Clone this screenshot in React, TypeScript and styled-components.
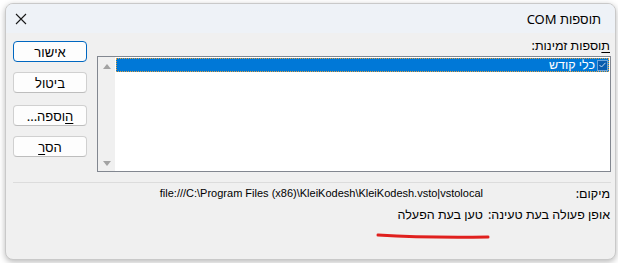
import React from 'react';
import styled, { createGlobalStyle } from 'styled-components';

const Global = createGlobalStyle`
  html, body {
    margin: 0;
    padding: 0;
    background: #ffffff;
    font-family: 'Noto Sans', 'Liberation Sans', sans-serif;
    font-size: 12.5px;
    color: #000;
  }
`;

const Page = styled.div`
  padding: 3px 2px 0 5px;
  width: 618px;
  height: 263px;
  box-sizing: border-box;
`;

const Window = styled.div`
  position: relative;
  width: 611px;
  height: 257px;
  box-sizing: border-box;
  border: 1px solid #c9c9c9;
  border-radius: 8px;
  overflow: hidden;
  background: #f0f0f0;
  box-shadow: 0 2px 6px rgba(0, 0, 0, 0.28);
  display: flex;
  flex-direction: column;
`;

const TitleBar = styled.div`
  height: 29px;
  background: #eef2f7;
  display: flex;
  align-items: center;
  justify-content: space-between;
  padding: 0 14px 0 9px;
  font-size: 13px;
`;

const CloseButton = styled.div`
  display: flex;
  width: 12px;
  height: 12px;
`;

const Body = styled.div`
  flex: 1;
  display: flex;
  flex-direction: column;
  padding: 6px 4px 0 7px;
`;

const TopArea = styled.div`
  display: flex;
  gap: 10px;
`;

const MainColumn = styled.div`
  flex: 1;
  display: flex;
  flex-direction: column;
`;

const Label = styled.div`
  height: 17px;
  line-height: 14px;
  padding-right: 1px;
`;

const AccessKey = styled.span`
  text-decoration: underline;
  text-underline-offset: 2px;
`;

const ListBox = styled.div`
  height: 116px;
  box-sizing: border-box;
  border: 1px solid #828790;
  background: #fff;
  display: flex;
`;

const Items = styled.div`
  flex: 1;
  padding: 1px 1px 0 1px;
`;

const Item = styled.div<{ $selected?: boolean }>`
  height: 14px;
  display: flex;
  align-items: center;
  gap: 2px;
  padding-right: 1px;
  background: ${(p) => (p.$selected ? '#0078d7' : 'transparent')};
  color: ${(p) => (p.$selected ? '#fff' : '#000')};
  outline: ${(p) => (p.$selected ? '1px dotted #e0a040' : 'none')};
  outline-offset: -1px;
  line-height: 14px;
`;

const Check = styled.span`
  width: 11px;
  height: 11px;
  box-sizing: border-box;
  border: 1px solid #6fa6dc;
  background: #0b5cad;
  display: flex;
  align-items: center;
  justify-content: center;
`;

const ScrollBar = styled.div`
  width: 17px;
  background: #f0f0f0;
  display: flex;
  flex-direction: column;
  justify-content: space-between;
  align-items: center;
  padding: 7px 0 5px;
`;

const Arrow = styled.span<{ $down?: boolean }>`
  width: 0;
  height: 0;
  border-left: 4px solid transparent;
  border-right: 4px solid transparent;
  ${(p) =>
    p.$down ? 'border-top: 5px solid #a3a3a3;' : 'border-bottom: 5px solid #a3a3a3;'}
`;

const ButtonColumn = styled.div`
  width: 74px;
  display: flex;
  flex-direction: column;
  gap: 10px;
  padding-top: 2px;
`;

const Button = styled.div<{ $primary?: boolean; $gapBefore?: number }>`
  height: 21px;
  box-sizing: border-box;
  margin-top: ${(p) => p.$gapBefore || 0}px;
  border: 1px solid ${(p) => (p.$primary ? '#0067c0' : '#d0d0d0')};
  border-bottom-color: ${(p) => (p.$primary ? '#0067c0' : '#bdbdbd')};
  border-radius: 4px;
  background: #fdfdfd;
  display: flex;
  align-items: center;
  justify-content: center;
  line-height: 14px;
  font-size: 13px;
`;

const Separator = styled.div`
  height: 1px;
  background: #dcdcdc;
  margin: 10px 0 3px 0;
`;

const InfoGrid = styled.div`
  display: grid;
  grid-template-columns: 121px 1fr;
  row-gap: 6px;
  column-gap: 6px;
  padding-right: 1px;
`;

const InfoCell = styled.div`
  line-height: 15px;
  white-space: nowrap;
`;

const PathValue = styled(InfoCell)`
  text-align: right;
  font-family: 'Liberation Sans', sans-serif;
  font-size: 11px;
`;

const Scribble = styled.svg`
  position: absolute;
  left: 370px;
  top: 226px;
`;

const App: React.FC = () => {
  return (
    <Page>
      <Global />
      <Window dir="rtl">
        <TitleBar>
          <span>תוספות COM</span>
          <CloseButton>
            <svg width="12" height="12" viewBox="0 0 12 12">
              <path d="M1 1L11 11M11 1L1 11" stroke="#1a1a1a" strokeWidth="1.1" />
            </svg>
          </CloseButton>
        </TitleBar>
        <Body>
          <TopArea>
            <MainColumn>
              <Label>
                <AccessKey>ת</AccessKey>וספות זמינות:
              </Label>
              <ListBox>
                <Items>
                  <Item $selected>
                    <Check>
                      <svg width="7" height="6" viewBox="0 0 7 6">
                        <path d="M0.5 3L2.5 5L6.5 0.8" stroke="#c8dcf0" strokeWidth="1" fill="none" />
                      </svg>
                    </Check>
                    <span>כלי קודש</span>
                  </Item>
                </Items>
                <ScrollBar>
                  <Arrow />
                  <Arrow $down />
                </ScrollBar>
              </ListBox>
            </MainColumn>
            <ButtonColumn>
              <Button $primary>אישור</Button>
              <Button>ביטול</Button>
              <Button $gapBefore={2}>
                <AccessKey>ה</AccessKey>וספה...
              </Button>
              <Button>
                הס<AccessKey>ר</AccessKey>
              </Button>
            </ButtonColumn>
          </TopArea>
          <Separator />
          <InfoGrid>
            <InfoCell>מיקום:</InfoCell>
            <PathValue dir="ltr">
              file:///C:\Program Files (x86)\KleiKodesh\KleiKodesh.vsto|vstolocal
            </PathValue>
            <InfoCell>אופן פעולה בעת טעינה:</InfoCell>
            <InfoCell>טען בעת הפעלה</InfoCell>
          </InfoGrid>
        </Body>
        <Scribble width="114" height="12" viewBox="0 0 114 12">
          <path d="M2 5 Q 50 8 112 7" stroke="#e0201e" strokeWidth="3" fill="none" strokeLinecap="round" />
        </Scribble>
      </Window>
    </Page>
  );
};

export default App;
